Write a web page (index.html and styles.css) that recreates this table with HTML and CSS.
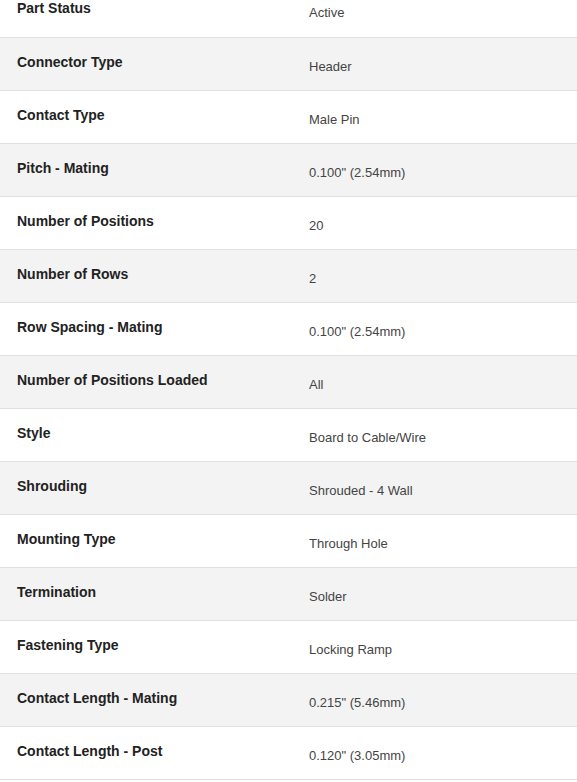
FILE: index.html
```html
<!DOCTYPE html>
<html>
<head>
<meta charset="utf-8">
<link rel="stylesheet" href="styles.css">
</head>
<body>
<table class="specs">
<colgroup><col class="col-label"><col class="col-value"></colgroup>
<tbody>
<tr><th>Part Status</th><td>Active</td></tr>
<tr><th>Connector Type</th><td>Header</td></tr>
<tr><th>Contact Type</th><td>Male Pin</td></tr>
<tr><th>Pitch - Mating</th><td>0.100" (2.54mm)</td></tr>
<tr><th>Number of Positions</th><td>20</td></tr>
<tr><th>Number of Rows</th><td>2</td></tr>
<tr><th>Row Spacing - Mating</th><td>0.100" (2.54mm)</td></tr>
<tr><th>Number of Positions Loaded</th><td>All</td></tr>
<tr><th>Style</th><td>Board to Cable/Wire</td></tr>
<tr><th>Shrouding</th><td>Shrouded - 4 Wall</td></tr>
<tr><th>Mounting Type</th><td>Through Hole</td></tr>
<tr><th>Termination</th><td>Solder</td></tr>
<tr><th>Fastening Type</th><td>Locking Ramp</td></tr>
<tr><th>Contact Length - Mating</th><td>0.215" (5.46mm)</td></tr>
<tr><th>Contact Length - Post</th><td>0.120" (3.05mm)</td></tr>
</tbody>
</table>
</body>
</html>
```
FILE: styles.css
```css
html, body {
  margin: 0;
  padding: 0;
  background: #ffffff;
}
body {
  font-family: "Liberation Sans", Arial, sans-serif;
  overflow: hidden;
}
.specs {
  width: 577px;
  margin-top: -16px;
  border-collapse: collapse;
  table-layout: fixed;
}
.col-label { width: 292px; }
.specs tr {
  height: 53px;
}
.specs tr:nth-child(even) {
  background: #f3f3f3;
}
.specs th, .specs td {
  box-sizing: border-box;
  height: 53px;
  vertical-align: top;
  border-bottom: 1px solid #e0e0e0;
  padding-left: 17px;
  padding-right: 0;
  padding-bottom: 0;
  text-align: left;
}
.specs th {
  font-weight: bold;
  font-size: 14px;
  line-height: 15px;
  padding-top: 17px;
  color: #222222;
}
.specs td {
  font-weight: normal;
  font-size: 13px;
  line-height: 15px;
  padding-top: 21px;
  color: #444444;
}
```
